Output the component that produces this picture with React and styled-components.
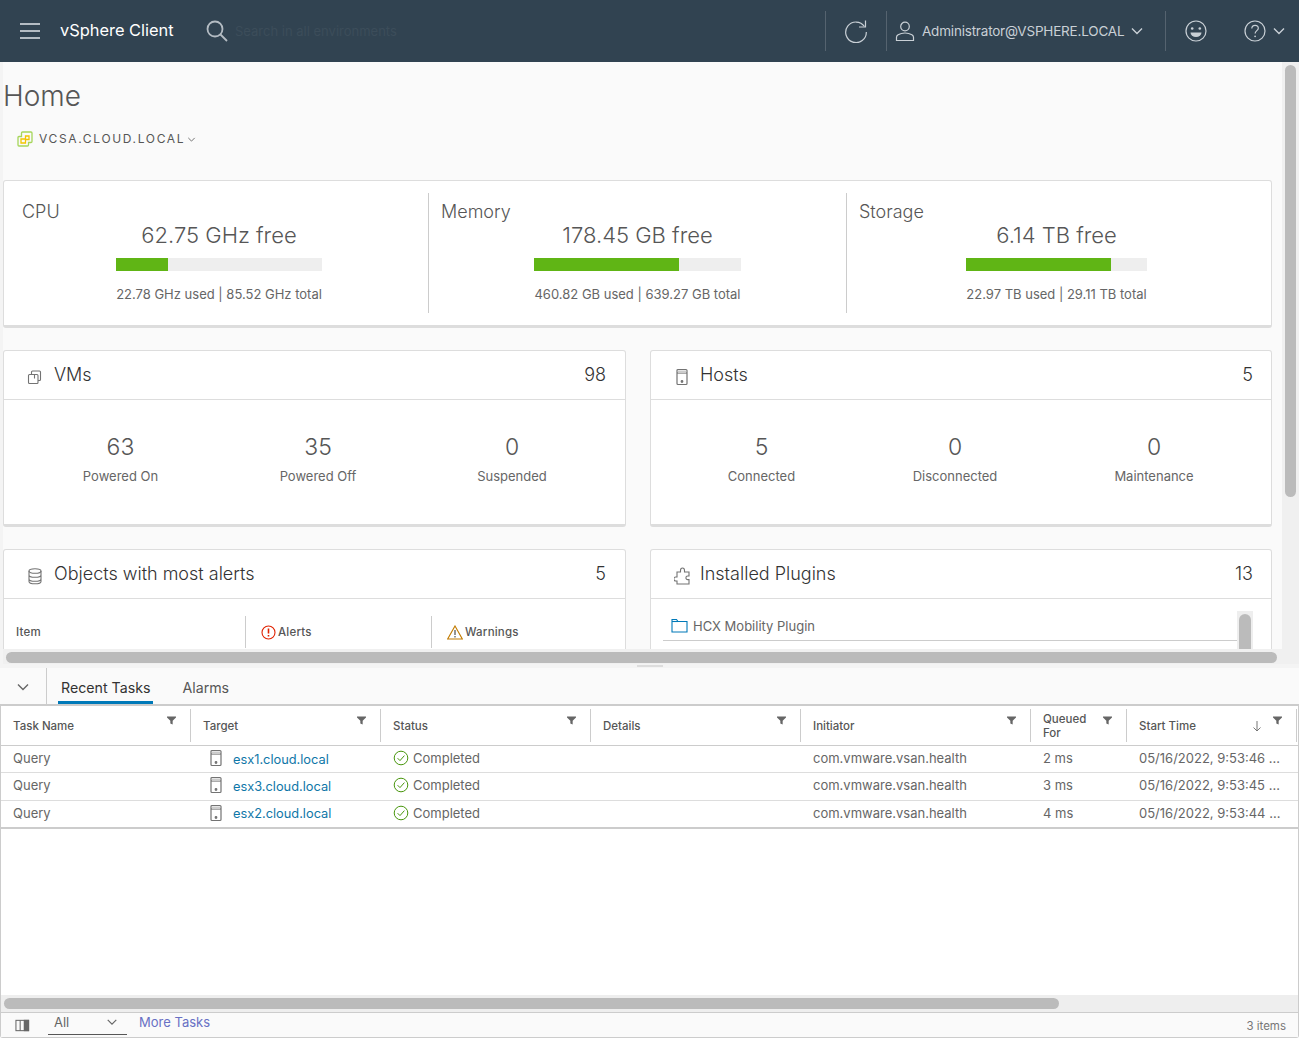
import React from "react";
import styled, { createGlobalStyle } from "styled-components";

const GlobalStyle = createGlobalStyle`
  html, body {
    margin: 0;
    padding: 0;
    height: 100%;
    overflow: hidden;
    background: #fafafa;
    font-family: Inter, "Liberation Sans", sans-serif;
    color: #565656;
  }
  * { box-sizing: border-box; }
`;

const capacity = [
  { label: "CPU", free: "62.75 GHz free", used: "22.78 GHz used | 85.52 GHz total", pct: 25.4, right: 0 },
  { label: "Memory", free: "178.45 GB free", used: "460.82 GB used | 639.27 GB total", pct: 69.9, right: 0 },
  { label: "Storage", free: "6.14 TB free", used: "22.97 TB used | 29.11 TB total", pct: 80.2, right: 5 },
];

const vmStats = [
  { value: "63", label: "Powered On" },
  { value: "35", label: "Powered Off" },
  { value: "0", label: "Suspended" },
];

const hostStats = [
  { value: "5", label: "Connected" },
  { value: "0", label: "Disconnected" },
  { value: "0", label: "Maintenance" },
];

const columns = "190px 190px 210px 210px 230px 96px 170px";

const heads = ["Task Name", "Target", "Status", "Details", "Initiator", "Queued For", "Start Time"];

const tasks = [
  { host: "esx1.cloud.local", queued: "2 ms", start: "05/16/2022, 9:53:46 ..." },
  { host: "esx3.cloud.local", queued: "3 ms", start: "05/16/2022, 9:53:45 ..." },
  { host: "esx2.cloud.local", queued: "4 ms", start: "05/16/2022, 9:53:44 ..." },
];

const Chevron = ({ size = 14, color = "#c9d0d6" }) => (
  <svg width={size} height={size} viewBox="0 0 14 14" fill="none" stroke={color} strokeWidth="1.4">
    <path d="M2 4.500 7 9.500 12 4.500" />
  </svg>
);

const HostIcon = () => (
  <svg width="16" height="20" viewBox="0 0 16 20" fill="none" stroke="#737373" strokeWidth="1.200">
    <rect x="3" y="2.500" width="10" height="15" rx="1" />
    <path d="M3 6h10" />
    <rect x="4" y="3.500" width="8" height="2.500" fill="#ccc" stroke="none" />
    <circle cx="8" cy="14.500" r=".8" fill="#737373" />
  </svg>
);

const FilterIcon = () => (
  <svg width="9" height="9" viewBox="0 0 10 10" fill="#666">
    <path d="M0 .5h10v1.300L6.300 5.400V9.500L3.700 8.400V5.400L0 1.800z" />
  </svg>
);

const CheckIcon = () => (
  <svg width="16" height="16" viewBox="0 0 16 16" fill="none" stroke="#48960c" strokeWidth="1">
    <circle cx="8" cy="8" r="6.800" />
    <path d="M4.600 8.200 7 10.600 11.400 5.600" />
  </svg>
);

const FolderIcon = () => (
  <svg width="17" height="15" viewBox="0 0 17 15" fill="none" stroke="#0079b8" strokeWidth="1.100">
    <path d="M1 14V1.500h4.500L7 3.500h9V14H1z" />
    <path d="M1 3.500h6" />
  </svg>
);

export default function App() {
  return (
    <Page>
      <GlobalStyle />
      <Header>
        <Burger>
          <span />
          <span />
          <span />
        </Burger>
        <Brand>vSphere Client</Brand>
        <svg width="24" height="24" viewBox="0 0 24 24" fill="none" stroke="#b4bcc3" strokeWidth="1.800">
          <circle cx="10" cy="10" r="7.500" />
          <path d="M15.500 15.500 22 22" />
        </svg>
        <SearchHint>Search in all environments</SearchHint>
        <HeaderRight>
          <HeaderCell $width={61}>
            <svg width="24" height="24" viewBox="0 0 24 24" fill="none" stroke="#c9d0d6" strokeWidth="1.200">
              <path d="M20.500 7.500A10.300 10.300 0 1 0 22.300 13" />
              <path d="M21.500 1.500V8H15" />
            </svg>
          </HeaderCell>
          <UserCell>
            <svg width="20" height="22" viewBox="0 0 20 22" fill="none" stroke="#c9d0d6" strokeWidth="1.200">
              <circle cx="10" cy="6.500" r="4.300" />
              <path d="M1.500 20.500v-3.200c0-1.200.6-2 1.600-2.600A14 14 0 0 1 10 13a14 14 0 0 1 6.900 1.700c1 .6 1.600 1.400 1.600 2.600v3.200z" />
            </svg>
            <UserName>Administrator@VSPHERE.LOCAL</UserName>
            <Chevron />
          </UserCell>
          <HeaderCell $width={61}>
            <svg width="22" height="22" viewBox="0 0 22 22" fill="none" stroke="#c9d0d6" strokeWidth="1.200">
              <circle cx="11" cy="11" r="10" />
              <circle cx="7.200" cy="8.500" r="1.300" fill="#c9d0d6" stroke="none" />
              <circle cx="14.800" cy="8.500" r="1.300" fill="#c9d0d6" stroke="none" />
              <path d="M5.500 12.500h11a5.500 4.500 0 0 1-11 0z" fill="#c9d0d6" stroke="none" />
            </svg>
          </HeaderCell>
          <HelpCell>
            <svg width="22" height="22" viewBox="0 0 22 22" fill="none" stroke="#c9d0d6" strokeWidth="1.200">
              <circle cx="11" cy="11" r="10" />
              <path d="M7.800 8.500c0-1.900 1.400-3.200 3.300-3.200s3.200 1.200 3.200 2.900c0 2.400-3.200 2.500-3.200 5.300" />
              <circle cx="11.100" cy="16.300" r=".9" fill="#c9d0d6" stroke="none" />
            </svg>
            <Chevron />
          </HelpCell>
        </HeaderRight>
      </Header>

      <Main>
        <Scroller>
          <Title>Home</Title>
          <CrumbBar>
            <Crumb>
              <svg width="16" height="16" viewBox="0 0 16 16" fill="none">
                <path d="M5.500 1h8.500a1 1 0 0 1 1 1v8.500a1 1 0 0 1-1 1h-2.500V14a1 1 0 0 1-1 1H2a1 1 0 0 1-1-1V6.500a1 1 0 0 1 1-1h2.500V2a1 1 0 0 1 1-1z" stroke="#a6d65a" strokeWidth="1.300" />
                <path d="M4 8h4.500V5h3.500v3.500H8.500V12H4z" stroke="#f2c500" strokeWidth="1.300" />
              </svg>
              <CrumbText>VCSA.CLOUD.LOCAL</CrumbText>
              <Chevron size={9} color="#666" />
            </Crumb>
          </CrumbBar>

          <CapacityCard>
            {capacity.map((c) => (
              <CapacityCol key={c.label}>
                <ColLabel>{c.label}</ColLabel>
                <Meter $right={c.right}>
                  <FreeText>{c.free}</FreeText>
                  <Track>
                    <Fill style={{ width: `${c.pct}%` }} />
                  </Track>
                  <UsedText>{c.used}</UsedText>
                </Meter>
              </CapacityCol>
            ))}
          </CapacityCard>

          <CardGrid>
            <Card>
              <CardHead>
                <CardIcon>
                  <svg width="16" height="16" viewBox="0 0 16 16" fill="none" stroke="#737373" strokeWidth="1.100">
                    <rect x="1.500" y="5.500" width="9.500" height="9" rx="1" />
                    <path d="M4.500 5.500V3a1 1 0 0 1 1-1h7a1 1 0 0 1 1 1v7.500a1 1 0 0 1-1 1H11M7.500 5.500v4" />
                  </svg>
                </CardIcon>
                <CardTitle>VMs</CardTitle>
                <CardCount>98</CardCount>
              </CardHead>
              <StatRow $cols="233px 162px 226px">
                {vmStats.map((s) => (
                  <Stat key={s.label}>
                    <StatValue>{s.value}</StatValue>
                    <StatLabel>{s.label}</StatLabel>
                  </Stat>
                ))}
              </StatRow>
            </Card>

            <Card>
              <CardHead $tight>
                <CardIcon $narrow>
                  <HostIcon />
                </CardIcon>
                <CardTitle>Hosts</CardTitle>
                <CardCount>5</CardCount>
              </CardHead>
              <StatRow $cols="221px 166px 232px">
                {hostStats.map((s) => (
                  <Stat key={s.label}>
                    <StatValue>{s.value}</StatValue>
                    <StatLabel>{s.label}</StatLabel>
                  </Stat>
                ))}
              </StatRow>
            </Card>

            <Card>
              <CardHead>
                <CardIcon>
                  <svg width="16" height="18" viewBox="0 0 16 18" fill="none" stroke="#737373" strokeWidth="1.100">
                    <ellipse cx="8" cy="4" rx="6" ry="2.300" />
                    <path d="M2 4v10.500c0 1.300 2.700 2.300 6 2.300s6-1 6-2.300V4M2 8c0 1.300 2.700 2.300 6 2.300S14 9.300 14 8M2 12c0 1.300 2.700 2.300 6 2.300s6-1 6-2.300" />
                  </svg>
                </CardIcon>
                <CardTitle>Objects with most alerts</CardTitle>
                <CardCount>5</CardCount>
              </CardHead>
              <AlertHead>
                <AlertCol>Item</AlertCol>
                <AlertCol>
                  <svg width="15" height="15" viewBox="0 0 15 15" fill="none" stroke="#e02200" strokeWidth="1.100">
                    <circle cx="7.500" cy="7.500" r="6.500" />
                    <path d="M7.500 3.500v5M7.500 10v1.500" strokeWidth="1.600" />
                  </svg>
                  Alerts
                </AlertCol>
                <AlertCol>
                  <svg width="16" height="15" viewBox="0 0 16 15" fill="none" stroke="#c27b00" strokeWidth="1.100">
                    <path d="M8 1 15.300 14H.7z" />
                    <path d="M8 5v5M8 11v1.500" strokeWidth="1.400" stroke="#666" />
                  </svg>
                  Warnings
                </AlertCol>
              </AlertHead>
            </Card>

            <Card>
              <CardHead $tight>
                <CardIcon $narrow>
                  <svg width="17" height="18" viewBox="0 0 17 18" fill="none" stroke="#737373" strokeWidth="1.100">
                    <path d="M6.500 3.500C6.500 2 7.300 1 8.500 1s2 1 2 2.500V5H15v4h-1.300a1.800 1.800 0 0 0 0 3.600H15V17H3v-3H1.800a2 2 0 0 1 0-4H3V5h3.500z" />
                  </svg>
                </CardIcon>
                <CardTitle>Installed Plugins</CardTitle>
                <CardCount>13</CardCount>
              </CardHead>
              <PluginBody>
                <PluginList>
                  <PluginRow>
                    <FolderIcon />
                    <PluginName>HCX Mobility Plugin</PluginName>
                  </PluginRow>
                  <PluginRow>
                    <FolderIcon />
                  </PluginRow>
                </PluginList>
                <PluginScroll>
                  <PluginThumb />
                </PluginScroll>
              </PluginBody>
            </Card>
          </CardGrid>
        </Scroller>

        <VerticalTrack>
          <VerticalThumb />
        </VerticalTrack>
        <HorizontalTrack>
          <HorizontalThumb />
        </HorizontalTrack>
      </Main>

      <Splitter>
        <SplitterHandle />
      </Splitter>

      <Bottom>
        <Tabs>
          <CollapseCell>
            <Chevron color="#666" />
          </CollapseCell>
          <Tab $active>Recent Tasks</Tab>
          <Tab>Alarms</Tab>
        </Tabs>

        <Grid>
          <HeadRow>
            {heads.map((h) => (
              <HeadCell key={h}>
                <span>{h}</span>
                {h === "Start Time" && (
                  <SortIcon>
                    <svg width="10" height="11" viewBox="0 0 10 11" fill="none" stroke="#777" strokeWidth="1">
                      <path d="M5 0v10M1.500 6.500 5 10l3.500-3.500" />
                    </svg>
                  </SortIcon>
                )}
                <FilterSlot>
                  <FilterIcon />
                </FilterSlot>
              </HeadCell>
            ))}
          </HeadRow>

          {tasks.map((t) => (
            <TaskRow key={t.host}>
              <TaskCell>Query</TaskCell>
              <HostCell>
                <HostIcon />
                <HostLink>{t.host}</HostLink>
              </HostCell>
              <TaskCell>
                <CheckIcon />
                Completed
              </TaskCell>
              <TaskCell />
              <TaskCell>com.vmware.vsan.health</TaskCell>
              <TaskCell>{t.queued}</TaskCell>
              <TaskCell>{t.start}</TaskCell>
            </TaskRow>
          ))}

          <GridSpacer />

          <GridScroll>
            <GridThumb />
          </GridScroll>

          <Footer>
            <svg width="15" height="13" viewBox="0 0 16 13" fill="none" stroke="#666" strokeWidth="1.100">
              <rect x="1" y="1" width="13.500" height="11" />
              <path d="M5.500 1v11M10 1v11" />
              <rect x="10" y="1" width="4.500" height="11" fill="#666" />
            </svg>
            <FooterSelect>
              <span>All</span>
              <Chevron size={12} color="#666" />
            </FooterSelect>
            <MoreTasks>More Tasks</MoreTasks>
            <ItemCount>3 items</ItemCount>
          </Footer>
        </Grid>
      </Bottom>
    </Page>
  );
}

const Page = styled.div`
  width: 1299px;
  height: 1038px;
  display: flex;
  flex-direction: column;
  overflow: hidden;
`;

const Header = styled.header`
  height: 62px;
  flex: none;
  display: flex;
  align-items: center;
  padding-left: 20px;
  background: #314351;
`;

const Burger = styled.div`
  width: 20px;
  display: flex;
  flex-direction: column;
  gap: 5px;
  margin-right: 20px;

  span {
    height: 2px;
    background: #b4bcc3;
  }
`;

const Brand = styled.div`
  width: 145px;
  margin-top: -2px;
  font-size: 16.4px;
  color: #fff;
`;

const SearchHint = styled.span`
  margin-left: 6px;
  font-size: 13px;
  color: #3c4d5a;
`;

const HeaderRight = styled.div`
  margin-left: auto;
  height: 40px;
  display: flex;
  align-items: stretch;
`;

const HeaderCell = styled.div`
  width: ${(p) => p.$width}px;
  display: flex;
  align-items: center;
  justify-content: center;
  border-left: 1px solid #55636f;
`;

const UserCell = styled.div`
  width: 279px;
  display: flex;
  align-items: center;
  padding-left: 8px;
  border-left: 1px solid #55636f;
`;

const UserName = styled.span`
  margin: 0 6px 0 7px;
  font-size: 13.5px;
  letter-spacing: -0.2px;
  color: #c9d0d6;
`;

const HelpCell = styled.div`
  width: 73px;
  display: flex;
  align-items: center;
  justify-content: flex-end;
  gap: 6px;
  padding-right: 13px;
`;

const Main = styled.main`
  position: relative;
  height: 602px;
  flex: none;
  overflow: hidden;
  background: #fafafa;
  border-left: 3px solid #f4f4f4;
`;

const Scroller = styled.div`
  width: 1269px;
`;

const Title = styled.h1`
  margin: 0;
  padding-top: 17px;
  height: 60px;
  font-size: 28px;
  line-height: 34px;
  font-weight: 300;
  color: #565656;
`;

const CrumbBar = styled.div`
  height: 58px;
  padding: 9px 0 0 14px;
`;

const Crumb = styled.div`
  display: flex;
  align-items: center;
`;

const CrumbText = styled.span`
  margin: 0 2px 0 6px;
  font-size: 12px;
  line-height: 16px;
  letter-spacing: 1.66px;
  color: #565656;
`;

const CapacityCard = styled.section`
  height: 148px;
  display: grid;
  grid-template-columns: 424px 418px 1fr;
  padding-top: 12px;
  background: #fff;
  border: 1px solid #ddd;
  border-bottom: 3px solid #ddd;
  border-radius: 3px;
`;

const CapacityCol = styled.div`
  height: 120px;
  padding: 8px 0 0 12px;
  display: flex;
  flex-direction: column;
  border-left: 1px solid #ccc;

  &:first-child {
    padding-left: 18px;
    border-left: none;
  }
`;

const ColLabel = styled.div`
  font-size: 18px;
  line-height: 22px;
  font-weight: 300;
  color: #565656;
`;

const Meter = styled.div`
  width: fit-content;
  align-self: center;
  display: flex;
  flex-direction: column;
  align-items: center;
  margin-left: -12px;
  margin-right: ${(p) => p.$right}px;
`;

const FreeText = styled.div`
  margin-top: -1px;
  font-size: 22px;
  line-height: 26px;
  font-weight: 300;
  color: #565656;
`;

const Track = styled.div`
  width: 100%;
  height: 13px;
  margin-top: 10px;
  background: #eee;
`;

const Fill = styled.div`
  height: 100%;
  background: #60b515;
`;

const UsedText = styled.div`
  margin-top: 16px;
  font-size: 13px;
  line-height: 15px;
  color: #666;
  white-space: nowrap;
`;

const CardGrid = styled.div`
  display: grid;
  grid-template-columns: 623px 622px;
  column-gap: 24px;
  row-gap: 22px;
  margin-top: 22px;
`;

const Card = styled.section`
  height: 177px;
  background: #fff;
  border: 1px solid #ddd;
  border-bottom: 3px solid #ddd;
  border-radius: 3px;
`;

const CardHead = styled.div`
  height: 49px;
  display: flex;
  align-items: center;
  padding: 0 ${(p) => (p.$tight ? "18px" : "19px")} 2px 23px;
  border-bottom: 1px solid #ddd;
`;

const CardIcon = styled.span`
  width: ${(p) => (p.$narrow ? "26px" : "27px")};
  display: flex;
  align-items: center;
  padding-top: 6px;
`;

const CardTitle = styled.div`
  font-size: 18px;
  font-weight: 300;
  color: #333;
`;

const CardCount = styled.div`
  margin-left: auto;
  font-size: 18px;
  font-weight: 300;
  color: #333;
`;

const StatRow = styled.div`
  display: grid;
  grid-template-columns: ${(p) => p.$cols};
  padding-top: 33px;
`;

const Stat = styled.div`
  text-align: center;
`;

const StatValue = styled.div`
  font-size: 23px;
  line-height: 28px;
  font-weight: 300;
  color: #565656;
`;

const StatLabel = styled.div`
  margin-top: 7px;
  font-size: 13px;
  line-height: 16px;
  color: #666;
`;

const AlertHead = styled.div`
  display: grid;
  grid-template-columns: 241px 186px 1fr;
  margin-top: 17px;
  height: 32px;
`;

const AlertCol = styled.div`
  display: flex;
  align-items: center;
  gap: 2px;
  padding-left: 15px;
  font-size: 11.5px;
  font-weight: 500;
  letter-spacing: 0.2px;
  color: #565656;
  border-left: 1px solid #ccc;

  &:first-child {
    padding-left: 12px;
    border-left: none;
  }
`;

const PluginBody = styled.div`
  display: flex;
  align-items: flex-start;
  padding: 12px 18px 0 12px;
`;

const PluginList = styled.div`
  flex: 1;
`;

const PluginRow = styled.div`
  height: 30px;
  display: flex;
  align-items: center;
  gap: 5px;
  padding-left: 8px;
  border-bottom: 1px solid #ccc;
`;

const PluginName = styled.span`
  font-size: 13px;
  color: #666;
`;

const PluginScroll = styled.div`
  width: 16px;
  height: 60px;
  padding: 3px 2px 0;
  background: #eee;
`;

const PluginThumb = styled.div`
  height: 50px;
  border-radius: 6px;
  background: #bbb;
`;

const VerticalTrack = styled.div`
  position: absolute;
  top: 0;
  right: 0;
  bottom: 0;
  width: 17px;
  padding: 3px 3px 0;
  background: #f0f0f0;
`;

const VerticalThumb = styled.div`
  height: 432px;
  border-radius: 6px;
  background: #bbb;
`;

const HorizontalTrack = styled.div`
  position: absolute;
  left: -3px;
  right: 0;
  bottom: 0;
  height: 15px;
  padding: 3px 0 1px 6px;
  background: #f0f0f0;
`;

const HorizontalThumb = styled.div`
  width: 1271px;
  height: 11px;
  border-radius: 6px;
  background: #bbb;
`;

const Splitter = styled.div`
  height: 4px;
  flex: none;
  display: flex;
  justify-content: center;
  padding-top: 1px;
  background: #f4f4f4;
`;

const SplitterHandle = styled.div`
  width: 26px;
  height: 2px;
  background: #ddd;
`;

const Bottom = styled.div`
  flex: 1;
  min-height: 0;
  display: flex;
  flex-direction: column;
`;

const Tabs = styled.div`
  height: 36px;
  flex: none;
  display: flex;
  align-items: stretch;
  background: #fafafa;
`;

const CollapseCell = styled.div`
  width: 47px;
  display: flex;
  align-items: center;
  justify-content: center;
  padding-top: 1px;
  border-right: 1px solid #ccc;
`;

const Tab = styled.div`
  margin-left: ${(p) => (p.$active ? "11px" : "26px")};
  padding: 5px 3px 0;
  display: flex;
  align-items: center;
  font-size: 14.2px;
  color: ${(p) => (p.$active ? "#333" : "#565656")};
  border-bottom: 3px solid ${(p) => (p.$active ? "#0079b8" : "transparent")};
`;

const Grid = styled.div`
  flex: 1;
  min-height: 0;
  display: flex;
  flex-direction: column;
  background: #fff;
  border: 1px solid #ccc;
  border-top: 2px solid #ccc;
  border-radius: 0 0 3px 3px;
`;

const HeadRow = styled.div`
  height: 40px;
  flex: none;
  display: grid;
  grid-template-columns: ${columns};
  border-bottom: 1px solid #ccc;
`;

const HeadCell = styled.div`
  position: relative;
  margin: 3px 0;
  padding: 0 34px 0 12px;
  display: flex;
  align-items: center;
  font-size: 11.5px;
  line-height: 14px;
  font-weight: 500;
  color: #565656;
  border-right: 1px solid #ccc;
`;

const FilterSlot = styled.span`
  position: absolute;
  top: 7px;
  right: 14px;
  line-height: 0;
`;

const SortIcon = styled.span`
  position: absolute;
  top: 12px;
  right: 34px;
  line-height: 0;
`;

const TaskRow = styled.div`
  height: 27.3px;
  flex: none;
  display: grid;
  grid-template-columns: ${columns};
  border-bottom: 1px solid #ddd;

  &:nth-of-type(4) {
    border-bottom: 2px solid #ccc;
    height: 28.4px;
  }
`;

const TaskCell = styled.div`
  display: flex;
  align-items: center;
  gap: 4px;
  padding: 0 0 2px 12px;
  font-size: 13px;
  color: #666;
  white-space: nowrap;
`;

const HostCell = styled(TaskCell)`
  padding-left: 17px;
`;

const HostLink = styled.a`
  margin-left: 5px;
  padding-top: 2px;
  font-size: 12.8px;
  color: #0f77a8;
`;

const GridSpacer = styled.div`
  flex: 1;
`;

const GridScroll = styled.div`
  height: 18px;
  flex: none;
  padding: 3px 0 0 3px;
  background: #eee;
  border-bottom: 1px solid #ccc;
`;

const GridThumb = styled.div`
  width: 1055px;
  height: 11px;
  border-radius: 6px;
  background: #bbb;
`;

const Footer = styled.div`
  height: 24px;
  flex: none;
  display: flex;
  align-items: center;
  padding: 0 12px 0 14px;
  background: #fafafa;
`;

const FooterSelect = styled.div`
  width: 79px;
  height: 20px;
  margin: 0 0 0 18px;
  padding: 0 9px 6px 6px;
  display: flex;
  align-items: center;
  justify-content: space-between;
  font-size: 13px;
  color: #666;
  border-bottom: 1px solid #565656;
`;

const MoreTasks = styled.a`
  margin: 0 0 7px 12px;
  font-size: 13px;
  color: #6870c4;
`;

const ItemCount = styled.span`
  margin-left: auto;
  padding-top: 1px;
  font-size: 11.5px;
  color: #777;
`;
